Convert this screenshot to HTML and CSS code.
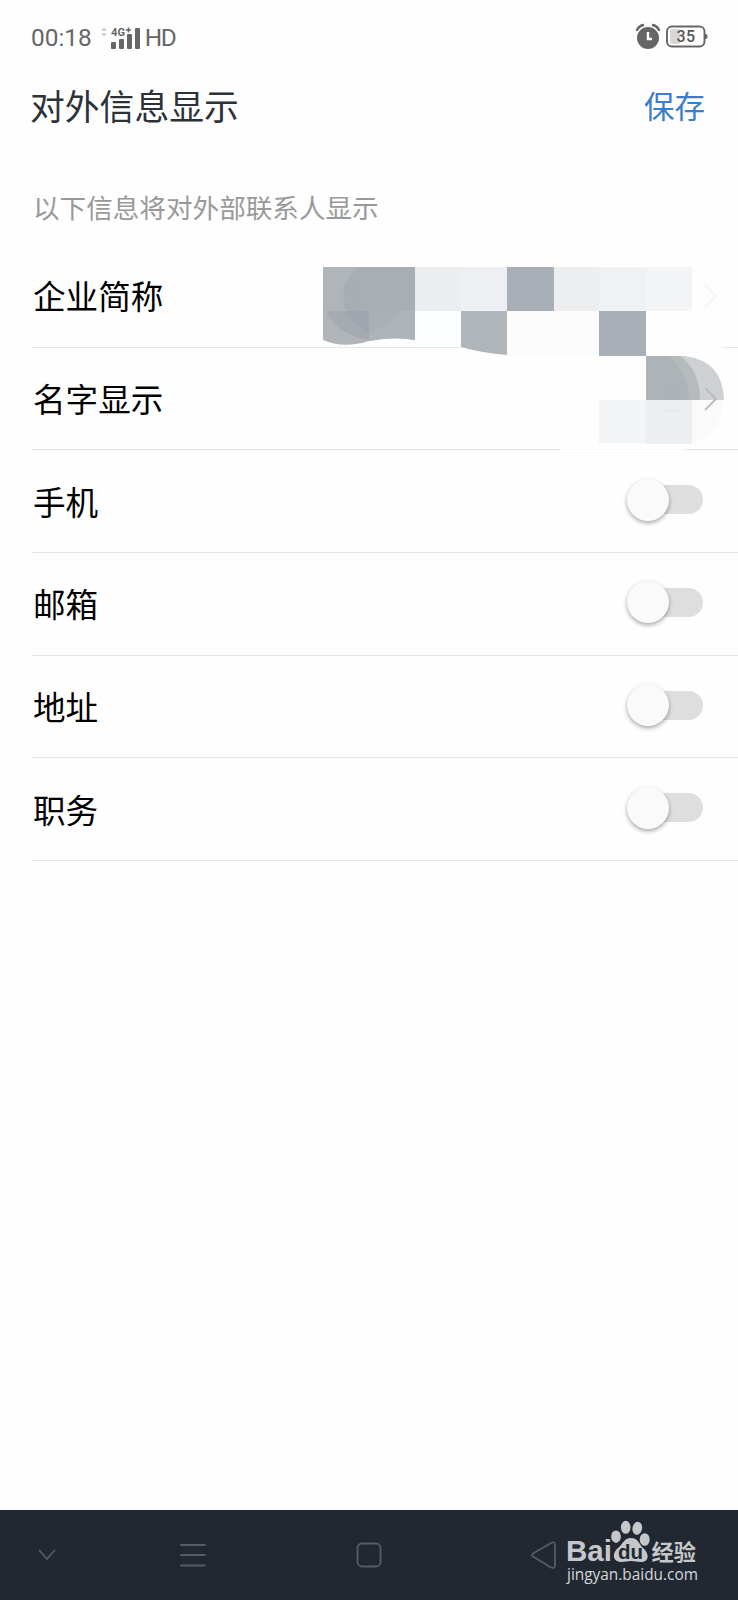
FILE: index.html
```
<!DOCTYPE html>
<html lang="zh">

<head>
    <meta charset="UTF-8">
    <meta name="viewport" content="width=device-width, initial-scale=1.0">
    <title>对外信息显示</title>
    <link rel="stylesheet" href="styles.css">
</head>

<body>
    <!-- 状态栏 -->
    <div class="status-bar">
        <span class="status-text">00:18</span>
        <svg class="signal" width="42" height="24" viewBox="0 0 42 24">
            <path d="M2 6l3-4 3 4zM2 8h6l-3 4z" fill="#d2d2d2"/>
            <text x="12" y="11" class="net-type" textLength="14" lengthAdjust="spacingAndGlyphs">4G</text>
            <path d="M27 5h5M29.500 2.500v5" stroke="#666" stroke-width="1.500"/>
            <g fill="#666">
                <rect x="12" y="17" width="5" height="7" rx="1"/>
                <rect x="20" y="14" width="5" height="10" rx="1"/>
                <rect x="28" y="9" width="5" height="15" rx="1"/>
                <rect x="36" y="3" width="5" height="21" rx="1"/>
            </g>
        </svg>
        <span class="status-text hd">HD</span>
        <div class="status-right">
            <svg width="26" height="27" viewBox="0 0 26 27">
                <circle cx="13" cy="15" r="11" fill="#666"/>
                <path d="M2 7Q4 3 8 2M24 7Q22 3 18 2" fill="none" stroke="#666" stroke-width="2.400" stroke-linecap="round"/>
                <path d="M13 9v7h4" fill="none" stroke="#fff" stroke-width="2.400"/>
            </svg>
            <svg width="42" height="24" viewBox="0 0 42 24">
                <rect x="4" y="4" width="10" height="15" rx="2" fill="#d6d6d6"/>
                <rect x="1" y="1.500" width="37.500" height="20" rx="5" fill="none" stroke="#666" stroke-width="1.900"/>
                <path d="M39 9h1q1.500 0 1.500 2.500t-1.500 2.500h-1z" fill="#666"/>
                <text x="20" y="17.200" class="battery-num" text-anchor="middle">35</text>
            </svg>
        </div>
    </div>

    <!-- 标题栏 -->
    <div class="title-bar">
        <h1>对外信息显示</h1>
        <a class="save">保存</a>
    </div>

    <p class="hint">以下信息将对外部联系人显示</p>

    <!-- 设置列表 -->
    <div class="list">
        <div class="row">
            <span>企业简称</span>
            <svg class="arrow faint" width="14" height="24" viewBox="0 0 14 24"><path d="M1 1l11 11L1 23"/></svg>
        </div>
        <div class="row">
            <span>名字显示</span>
            <svg class="arrow" width="14" height="24" viewBox="0 0 14 24"><path d="M1 1l11 11L1 23"/></svg>
        </div>
        <div class="row"><span>手机</span><div class="switch"></div></div>
        <div class="row"><span>邮箱</span><div class="switch"></div></div>
        <div class="row"><span>地址</span><div class="switch"></div></div>
        <div class="row"><span>职务</span><div class="switch"></div></div>

        <!-- 马赛克遮挡 -->
        <svg class="mosaic" width="415" height="190" viewBox="323 262 415 190">
            <path d="M461 345h262v6H461z" fill="#fff" opacity=".8"/>
            <path d="M560 448h125v4H560z" fill="#fff" opacity=".7"/>
            <path d="M323 267h92v73q-22-4-46 1-26 8-46-1z" fill="#afb5b9"/>
            <path d="M358 267h57v44h-69q-10-24 12-44z" fill="#a9aeb5"/>
            <path d="M326 311h43v29q-31-5-43-29z" fill="#a6abb2"/>
            <path d="M346 311h23v21q-16-6-23-21z" fill="#a1a6ae"/>
            <path d="M369 311h46v29q-22-4-46 1z" fill="#afb4b8"/>
            <path d="M369 311h30q-10 16-30 22z" fill="#abb0b4"/>
            <path d="M415 267h46v44h-46z" fill="#ebedef"/>
            <path d="M461 267h46v44h-46z" fill="#eeeff2"/>
            <path d="M507 267h47v44h-47z" fill="#a9afb6"/>
            <path d="M554 267h45v44h-45z" fill="#eceef0"/>
            <path d="M599 267h47v44h-47z" fill="#eff1f3"/>
            <path d="M646 267h46v44h-46z" fill="#f2f4f5"/>
            <path d="M415 311h46v34h-46z" fill="#fbfefe"/>
            <path d="M461 311h46v44q-25-2-46-8z" fill="#afb5b8"/>
            <path d="M507 311h92v45h-92z" fill="#fcfcfd"/>
            <path d="M599 311h47v45h-47z" fill="#a9afb7"/>
            <path d="M646 311h46v44h-46z" fill="#fdfdfd"/>
            <path d="M646 356h39q38 5 39 44h-78z" fill="#cfd0d1"/>
            <path d="M646 356h34q20 14 20 44h-54z" fill="#b5babd"/>
            <path d="M646 356h23q20 18 20 44h-43z" fill="#adb4b8"/>
            <path d="M599 400h47v43h-47z" fill="#f3f4f6"/>
            <path d="M646 400h46v44h-46z" fill="#edeef0"/>
            <path d="M692 400h31q-2 35-31 44z" fill="#fafafa"/>
            <path d="M341 287h17v20h-17zM347 287v13M353 287v13M663 391h17M663 399h17M663 411h17" fill="none" stroke="#8d959b" stroke-opacity=".1"/>
            <path d="M705 388l11 11-11 11" fill="none" stroke="#bbbcbe" stroke-width="2"/>
        </svg>
    </div>

    <!-- 底部导航 -->
    <div class="nav-bar">
        <svg width="94" height="32" viewBox="0 0 94 32"><path d="M39.500 11.500l7.500 8.500 7.500-8.500"/></svg>
        <svg width="198" height="32" viewBox="0 0 198 32"><path d="M87 6h24M87 16h24M87 26.500h24"/></svg>
        <svg width="154" height="32" viewBox="0 0 154 32"><rect x="65.500" y="4.500" width="23" height="23" rx="4.500"/></svg>
        <svg width="194" height="32" viewBox="0 0 194 32"><path d="M87 14.500Q85 16 87 17.500L105 28.500Q109 30 109 26V6Q109 2 105 4z"/></svg>
    </div>

    <!-- 水印 -->
    <svg class="watermark" width="140" height="70" viewBox="0 0 140 70">
        <g fill="#c5c7cb">
            <text x="4" y="41" class="wm-brand" textLength="46" lengthAdjust="spacingAndGlyphs">Bai</text>
            <ellipse cx="54" cy="16.700" rx="4.900" ry="6.200"/>
            <ellipse cx="63.700" cy="7.300" rx="4.800" ry="6.500"/>
            <ellipse cx="75.300" cy="8.300" rx="4.800" ry="6.500" transform="rotate(12 75.300 8.300)"/>
            <ellipse cx="82.700" cy="19.500" rx="5" ry="6.300"/>
            <path d="M69 18c7 0 8 6 12 10 7 6 6 14-2 14-4 0-6-1-10-1s-6 1-9 1c-10 0-10-9-4-14 5-4 6-10 13-10z"/>
            <text x="89.500" y="40" class="wm-cn" textLength="44.500" lengthAdjust="spacingAndGlyphs">经验</text>
        </g>
        <text x="56" y="39" class="wm-du" textLength="25" lengthAdjust="spacingAndGlyphs">du</text>
        <text x="5" y="59.500" class="wm-url" textLength="131" lengthAdjust="spacingAndGlyphs">jingyan.baidu.com</text>
    </svg>
</body>

</html>
```
FILE: styles.css
```
* {
    box-sizing: border-box;
}

body {
    margin: 0;
    width: 738px;
    height: 1600px;
    position: relative;
    display: flex;
    flex-direction: column;
    font-family: "Noto Sans CJK SC", sans-serif;
    background: #fefefe;
    color: #000;
    overflow: hidden;
}

/* 状态栏 */
.status-bar {
    display: flex;
    align-items: center;
    height: 74px;
    padding: 0 30px 0 31px;
}

.status-text {
    font-family: Roboto, sans-serif;
    font-size: 24.400px;
    color: #666;
}

.status-text.hd {
    letter-spacing: -1.500px;
}

.signal {
    margin: 0 4px 1px 7px;
}

.net-type {
    font: bold 11px Roboto, sans-serif;
    fill: #666;
}

.battery-num {
    font: 500 16px Roboto, sans-serif;
    letter-spacing: 0.500px;
    fill: #555;
}

.status-right {
    display: flex;
    align-items: center;
    gap: 5px;
    margin: 0 0 1px auto;
}

/* 标题栏 */
.title-bar {
    display: flex;
    justify-content: space-between;
    align-items: center;
    height: 62px;
    padding: 0 33px 0 30px;
}

h1 {
    margin: 0;
    font-size: 34.800px;
    font-weight: 400;
    color: #2c3238;
}

.save {
    font-size: 30.500px;
    color: #3a7dcc;
}

.hint {
    margin: 51px 0 0;
    padding-left: 33px;
    height: 58px;
    font-size: 26.600px;
    line-height: 39px;
    color: #999;
}

/* 设置列表 */
.list {
    position: relative;
    margin-left: 32px;
}

.row {
    display: flex;
    justify-content: space-between;
    align-items: center;
    height: 102.700px;
    padding: 0 35px 0 1px;
    border-bottom: 1px solid #e6e6e6;
    font-size: 32.600px;
}

.row span {
    margin-bottom: 2px;
}

.arrow {
    margin-right: -15px;
    fill: none;
    stroke: #c4c4c6;
    stroke-width: 1.800;
}

.arrow.faint {
    stroke: #f3f3f4;
}

.row:nth-child(2) .arrow {
    visibility: hidden;
}

.switch {
    width: 70px;
    height: 29px;
    margin-bottom: 3px;
    display: flex;
    align-items: center;
    border-radius: 15px;
    background: #dedede;
}

.switch::before {
    content: "";
    flex: none;
    width: 42px;
    height: 42px;
    margin-left: -6px;
    border-radius: 50%;
    background: #fafafa;
    box-shadow: 0 2px 4px rgba(0, 0, 0, 0.35);
}

.mosaic {
    position: absolute;
    left: 291px;
    top: 17px;
}

/* 底部导航 */
.nav-bar {
    display: flex;
    align-items: center;
    height: 90px;
    margin-top: auto;
    background: #222831;
}

.nav-bar svg {
    fill: none;
    stroke: #555c66;
    stroke-width: 1.800;
    stroke-linecap: round;
}

/* 水印 */
.watermark {
    position: absolute;
    left: 562px;
    top: 1520px;
}

.wm-brand {
    font: bold 30px "Liberation Sans", sans-serif;
}

.wm-du {
    font: bold 20px "Liberation Sans", sans-serif;
    fill: #222831;
}

.wm-cn {
    font: bold 22px "Noto Sans CJK SC", sans-serif;
}

.wm-url {
    font: 16px "Open Sans", sans-serif;
    fill: #d5d7da;
}
```
